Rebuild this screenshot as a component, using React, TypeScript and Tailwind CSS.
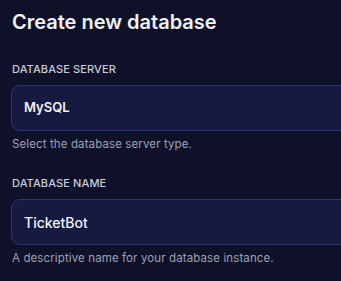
export default function App() {
  return (
    <div className="min-h-screen bg-[#0e1128] pl-[11px] pt-[7px] font-['Inter',sans-serif] overflow-hidden">
      <h1 className="text-[20px] font-semibold leading-[30px] text-[#f1f2f6] pl-px">Create new database</h1>

      <div className="mt-[25px]">
        <label className="block text-[11px] font-medium uppercase tracking-[0.01em] text-[#c9ccd8] leading-[14px] pl-px">
          Database Server
        </label>
        <div className="mt-[9px] w-[360px] h-[46px] rounded-[9px] border border-[#2c3170] bg-[#161a40] flex items-center pl-[12px]">
          <span className="text-[13px] font-semibold text-[#f1f2f6]">MySQL</span>
        </div>
        <p className="mt-[6px] text-[11.5px] tracking-[0.01em] text-[#9ca1b6] leading-[14px] pl-px">Select the database server type.</p>
      </div>

      <div className="mt-[25px]">
        <label className="block text-[11px] font-medium uppercase tracking-[0.01em] text-[#c9ccd8] leading-[14px] pl-px">
          Database Name
        </label>
        <div className="mt-[9px] w-[360px] h-[46px] rounded-[9px] border border-[#2c3170] bg-[#161a40] flex items-center pl-[12px]">
          <span className="text-[14px] font-medium text-[#f1f2f6]">TicketBot</span>
        </div>
        <p className="mt-[6px] text-[11.5px] tracking-[0.01em] text-[#9ca1b6] leading-[14px] pl-px">A descriptive name for your database instance.</p>
      </div>
    </div>
  );
}
